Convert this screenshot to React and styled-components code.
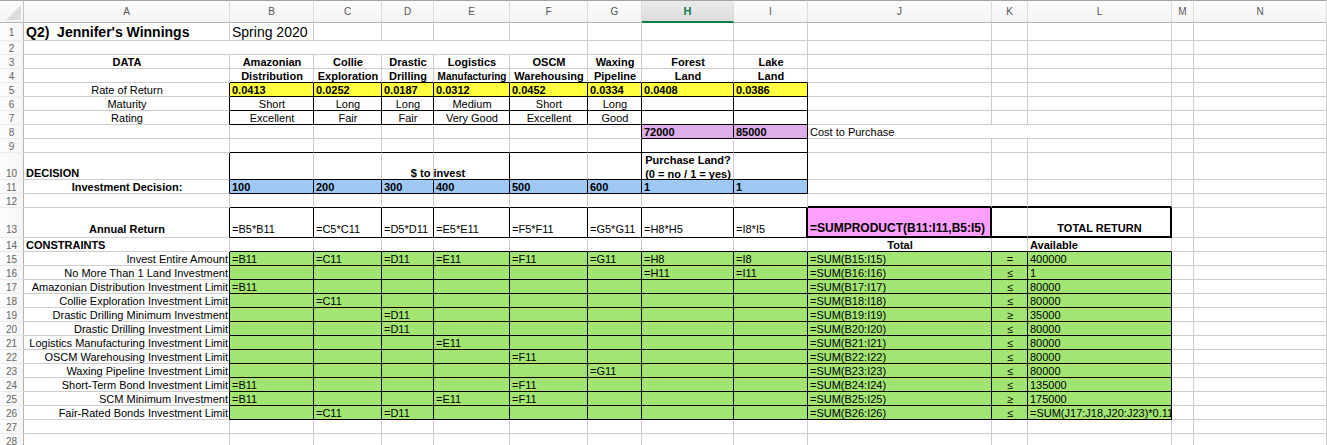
import React from "react";
import styled, { createGlobalStyle } from "styled-components";

const GlobalStyle = createGlobalStyle`
  body {
    margin: 0;
    background: #fff;
    font-family: "Liberation Sans", Arial, sans-serif;
  }
`;

const SheetWrapper = styled.main`
  height: 100vh;
  overflow: hidden;
`;

const Sheet = styled.table`
  width: 100%;
  table-layout: fixed;
  border-collapse: separate;
  border-spacing: 0;
  font-size: 11px;
  line-height: 11px;
  color: #000;
`;

const Column = styled.col`
  width: ${({ $width }) => ($width ? `${$width}px` : "auto")};
`;

const Corner = styled.td`
  box-sizing: border-box;
  height: 23px;
  padding: 4px 2px 0 0;
  border-top: 1px solid #a3a3a3;
  border-right: 1px solid #c4c4c4;
  border-bottom: 1px solid #b4b4b4;
  background: linear-gradient(#fcfcfc, #f4f4f4);
  vertical-align: top;
  svg {
    display: block;
    margin-left: auto;
  }
`;

const ColumnHead = styled.th`
  box-sizing: border-box;
  height: 23px;
  padding: 0;
  border-top: 1px solid #a3a3a3;
  border-right: 1px solid #dcdcdc;
  border-bottom: ${({ $selected }) =>
    $selected ? "2px solid #107c49" : "1px solid #b4b4b4"};
  background: ${({ $selected }) =>
    $selected
      ? "linear-gradient(#ececec, #dcdcdc)"
      : "linear-gradient(#fcfcfc, #f4f4f4)"};
  color: ${({ $selected }) => ($selected ? "#107c49" : "#555")};
  font-size: ${({ $selected }) => ($selected ? "11px" : "10px")};
  font-weight: ${({ $selected }) => ($selected ? 700 : 400)};
`;

const RowHead = styled.th`
  box-sizing: border-box;
  height: ${({ $height }) => $height}px;
  padding: 0 0 ${({ $lift }) => $lift}px;
  border-right: 1px solid #b4b4b4;
  border-bottom: 1px solid #ebebeb;
  background: linear-gradient(to right, #fcfcfc, #f5f5f5);
  color: #666;
  font-size: 10px;
  font-weight: 400;
  vertical-align: bottom;
`;

const lines = {
  none: "1px solid #cdcdcd",
  thin: "1px solid #000",
  thick: "2px solid #000",
};

const Cell = styled.td`
  box-sizing: border-box;
  height: ${({ $height }) => $height}px;
  padding: 0 1px ${({ $lift }) => $lift}px 2px;
  border-right: ${({ $right }) => lines[$right]};
  border-bottom: ${({ $bottom }) => lines[$bottom]};
  background: ${({ $fill }) => $fill || "transparent"};
  font-size: ${({ $size }) => $size || 11}px;
  font-weight: ${({ $bold }) => ($bold ? 700 : 400)};
  text-align: ${({ $align }) => $align || "left"};
  vertical-align: bottom;
  white-space: pre;
  overflow: ${({ $clip }) => ($clip ? "hidden" : "visible")};
`;

// text centred over its own cell and the empty ones to the right
const Across = styled.div`
  width: ${({ $width }) => $width}px;
  text-align: center;
`;

const TwoLines = styled.div`
  margin-bottom: -2px;
  line-height: 14px;
`;

const columns = [
  ["A", 206],
  ["B", 84],
  ["C", 68],
  ["D", 52],
  ["E", 76],
  ["F", 78],
  ["G", 54],
  ["H", 92],
  ["I", 74],
  ["J", 184],
  ["K", 36],
  ["L", 144],
  ["M", 22],
  ["N", null],
];
const letters = columns.map(([letter]) => letter);

const widthOf = (range) =>
  columns
    .filter(([letter]) => range.includes(letter))
    .reduce((sum, [, width]) => sum + width, 0);

const fills = [
  { cols: "BCDEFGHI", top: 5, bottom: 5, color: "#ffff3f" },
  { cols: "HI", top: 8, bottom: 8, color: "#dfaee8" },
  { cols: "BCDEFGHI", top: 11, bottom: 11, color: "#9fc8f5" },
  { cols: "J", top: 13, bottom: 13, color: "#ff9fff" },
  { cols: "BCDEFGHIJKL", top: 15, bottom: 26, color: "#a2e573" },
];

const frames = [
  { cols: "J", top: 13, bottom: 13, weight: "thick" },
  { cols: "KL", top: 13, bottom: 13, weight: "thick" },
  { cols: "BCDEFGHI", top: 5, bottom: 7, weight: "thin", inner: true },
  { cols: "HI", top: 8, bottom: 8, weight: "thin", inner: true },
  { cols: "HI", top: 9, bottom: 9, weight: "thin" },
  { cols: "BCDE", top: 10, bottom: 10, weight: "thin" },
  { cols: "FG", top: 10, bottom: 10, weight: "thin" },
  { cols: "HI", top: 10, bottom: 10, weight: "thin" },
  { cols: "BCDEFGHI", top: 11, bottom: 11, weight: "thin", inner: true },
  { cols: "BCDEFGHI", top: 13, bottom: 13, weight: "thin", inner: true },
  { cols: "BCDEFGHIJKL", top: 15, bottom: 26, weight: "thin", inner: true },
];

const inside = (area, col, row) =>
  Boolean(col) &&
  area.cols.includes(col) &&
  row >= area.top &&
  row <= area.bottom;

const lineBetween = (colA, rowA, colB, rowB) => {
  const frame = frames.find((area) => {
    const a = inside(area, colA, rowA);
    const b = inside(area, colB, rowB);
    return a !== b || (a && b && area.inner);
  });
  return frame ? frame.weight : "none";
};

const head = (text, more) => ({ text, bold: true, align: "center", ...more });
const mid = (text) => ({ text, align: "center" });
const bold = (text, more) => ({ text, bold: true, ...more });
const label = (text) => ({ text, align: "right" });

const constraint = (name, row, formulas, sign, available) => ({
  cells: {
    A: label(name),
    ...formulas,
    J: `=SUM(B${row}:I${row})`,
    K: mid(sign),
    L: { text: available, clip: true },
  },
});

const rows = [
  {
    height: 18,
    lift: 2,
    cells: {
      A: bold("Q2)  Jennifer's Winnings", { size: 14 }),
      B: { text: "Spring 2020", size: 14 },
    },
  },
  { cells: { A: { text: "", span: 6 } } },
  {
    cells: {
      A: head("DATA"),
      B: head("Amazonian"),
      C: head("Collie"),
      D: head("Drastic"),
      E: head("Logistics"),
      F: head("OSCM"),
      G: head("Waxing"),
      H: head("Forest"),
      I: head("Lake"),
    },
  },
  {
    cells: {
      B: head("Distribution"),
      C: head("Exploration"),
      D: head("Drilling"),
      E: head("Manufacturing", { size: 10 }),
      F: head("Warehousing"),
      G: head("Pipeline"),
      H: head("Land"),
      I: head("Land"),
    },
  },
  {
    cells: {
      A: mid("Rate of Return"),
      B: bold("0.0413"),
      C: bold("0.0252"),
      D: bold("0.0187"),
      E: bold("0.0312"),
      F: bold("0.0452"),
      G: bold("0.0334"),
      H: bold("0.0408"),
      I: bold("0.0386"),
    },
  },
  {
    cells: {
      A: mid("Maturity"),
      B: mid("Short"),
      C: mid("Long"),
      D: mid("Long"),
      E: mid("Medium"),
      F: mid("Short"),
      G: mid("Long"),
    },
  },
  {
    cells: {
      A: mid("Rating"),
      B: mid("Excellent"),
      C: mid("Fair"),
      D: mid("Fair"),
      E: mid("Very Good"),
      F: mid("Excellent"),
      G: mid("Good"),
    },
  },
  {
    cells: {
      H: bold("72000"),
      I: bold("85000"),
      J: { text: "Cost to Purchase", span: 3 },
    },
  },
  { cells: {} },
  {
    height: 27,
    cells: {
      A: bold("DECISION"),
      B: bold("$ to invest", { across: "BCDEFG" }),
      H: head("Purchase Land?\n(0 = no / 1 = yes)", { twoLines: true }),
    },
  },
  {
    cells: {
      A: head("Investment Decision:"),
      B: bold("100"),
      C: bold("200"),
      D: bold("300"),
      E: bold("400"),
      F: bold("500"),
      G: bold("600"),
      H: bold("1"),
      I: bold("1"),
    },
  },
  { cells: {} },
  {
    height: 30,
    lift: 2,
    cells: {
      A: head("Annual Return"),
      B: "=B5*B11",
      C: "=C5*C11",
      D: "=D5*D11",
      E: "=E5*E11",
      F: "=F5*F11",
      G: "=G5*G11",
      H: "=H8*H5",
      I: "=I8*I5",
      J: bold("=SUMPRODUCT(B11:I11,B5:I5)", { size: 12 }),
      L: head("TOTAL RETURN"),
    },
  },
  { cells: { A: bold("CONSTRAINTS"), J: head("Total"), L: bold("Available") } },
  constraint(
    "Invest Entire Amount",
    15,
    {
      B: "=B11",
      C: "=C11",
      D: "=D11",
      E: "=E11",
      F: "=F11",
      G: "=G11",
      H: "=H8",
      I: "=I8",
    },
    "=",
    "400000"
  ),
  constraint(
    "No More Than 1 Land Investment",
    16,
    { H: "=H11", I: "=I11" },
    "≤",
    "1"
  ),
  constraint(
    "Amazonian Distribution Investment Limit",
    17,
    { B: "=B11" },
    "≤",
    "80000"
  ),
  constraint(
    "Collie Exploration Investment Limit",
    18,
    { C: "=C11" },
    "≤",
    "80000"
  ),
  constraint(
    "Drastic Drilling Minimum Investment",
    19,
    { D: "=D11" },
    "≥",
    "35000"
  ),
  constraint(
    "Drastic Drilling Investment Limit",
    20,
    { D: "=D11" },
    "≤",
    "80000"
  ),
  constraint(
    "Logistics Manufacturing Investment Limit",
    21,
    { E: "=E11" },
    "≤",
    "80000"
  ),
  constraint(
    "OSCM Warehousing Investment Limit",
    22,
    { F: "=F11" },
    "≤",
    "80000"
  ),
  constraint(
    "Waxing Pipeline Investment Limit",
    23,
    { G: "=G11" },
    "≤",
    "80000"
  ),
  constraint(
    "Short-Term Bond Investment Limit",
    24,
    { B: "=B11", F: "=F11" },
    "≤",
    "135000"
  ),
  constraint(
    "SCM Minimum Investment",
    25,
    { B: "=B11", E: "=E11", F: "=F11" },
    "≥",
    "175000"
  ),
  constraint(
    "Fair-Rated Bonds Investment Limit",
    26,
    { C: "=C11", D: "=D11" },
    "≤",
    "=SUM(J17:J18,J20:J23)*0.11"
  ),
  { cells: {} },
  { cells: {} },
];

const CellText = ({ cell }) => {
  if (cell.across) {
    return <Across $width={widthOf(cell.across)}>{cell.text}</Across>;
  }
  if (cell.twoLines) {
    return <TwoLines>{cell.text}</TwoLines>;
  }
  return cell.text;
};

const SheetRow = ({ row, number }) => {
  const { height = 14, lift = 0, cells } = row;
  const items = [];

  for (let i = 0; i < letters.length; ) {
    const letter = letters[i];
    const value = cells[letter] || "";
    const cell = typeof value === "string" ? { text: value } : value;
    const span = cell.span || 1;
    const last = letters[i + span - 1];
    const next = letters[i + span];
    const fill = fills.find((area) => inside(area, letter, number));

    items.push(
      <Cell
        key={letter}
        colSpan={span}
        $height={height}
        $lift={lift}
        $right={lineBetween(last, number, next, number)}
        $bottom={lineBetween(letter, number, letter, number + 1)}
        $fill={fill && fill.color}
        $size={cell.size}
        $bold={cell.bold}
        $align={cell.align}
        $clip={cell.clip}
      >
        <CellText cell={cell} />
      </Cell>
    );
    i += span;
  }

  return (
    <tr>
      <RowHead scope="row" $height={height} $lift={lift}>
        {number}
      </RowHead>
      {items}
    </tr>
  );
};

const App = () => {
  return (
    <SheetWrapper>
      <GlobalStyle />
      <Sheet>
        <colgroup>
          <Column $width={24} />
          {columns.map(([letter, width]) => (
            <Column key={letter} $width={width} />
          ))}
        </colgroup>
        <thead>
          <tr>
            <Corner>
              <svg width="15" height="15" viewBox="0 0 15 15" aria-hidden="true">
                <path d="M15 0V15H0Z" fill="#dcdcdc" />
              </svg>
            </Corner>
            {letters.map((letter) => (
              <ColumnHead key={letter} scope="col" $selected={letter === "H"}>
                {letter}
              </ColumnHead>
            ))}
          </tr>
        </thead>
        <tbody>
          {rows.map((row, index) => (
            <SheetRow key={index} row={row} number={index + 1} />
          ))}
        </tbody>
      </Sheet>
    </SheetWrapper>
  );
};

export default App;
